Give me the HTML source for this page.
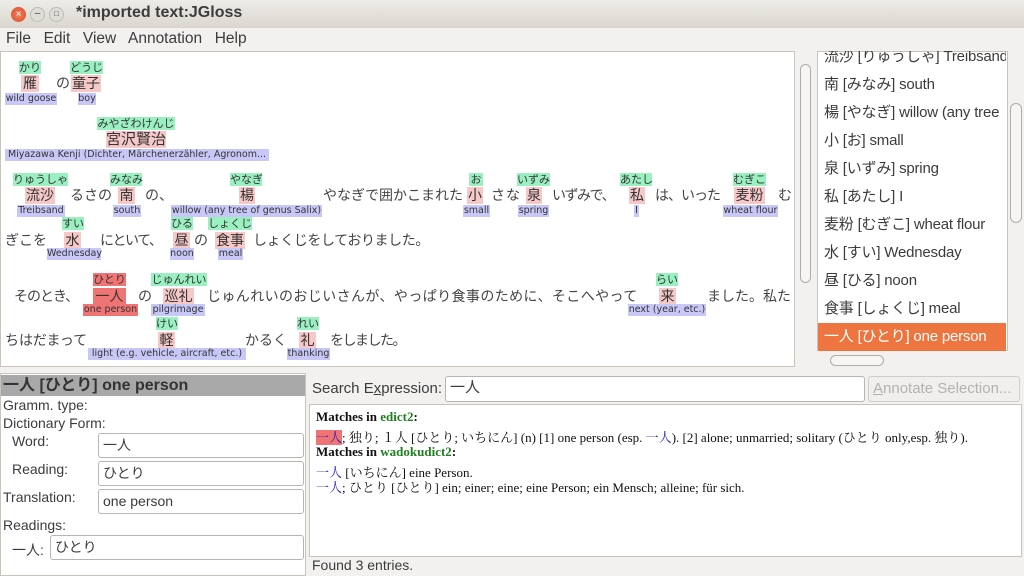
<!DOCTYPE html>
<html><head><meta charset="utf-8"><style>
*{margin:0;padding:0;box-sizing:border-box}
body{width:1024px;height:576px;overflow:hidden;background:#f2f1f0;font-family:"Liberation Sans","Noto Sans CJK JP",sans-serif;position:relative;color:#3c3c3c}
.a{position:absolute;white-space:nowrap}
.r{position:absolute;white-space:nowrap;background:#9af0c0;font-size:11px;line-height:12px;height:13px;text-align:center;color:#333;font-family:"Noto Sans CJK JP",sans-serif}
.k{position:absolute;white-space:nowrap;background:#f6c8c8;font-size:14px;line-height:16px;height:17px;text-align:center;color:#333;font-family:"Noto Sans CJK JP",sans-serif}
.t{position:absolute;white-space:nowrap;background:#c8c8f8;font-size:9.5px;line-height:11px;height:12px;text-align:center;color:#333;font-family:"DejaVu Sans",sans-serif}
.s{position:absolute;white-space:nowrap;font-size:14px;line-height:16px;color:#444;font-family:"Noto Sans CJK JP",sans-serif}
.sel{background:#f07474}
.li{position:absolute;left:818px;width:188px;height:28px;line-height:28px;padding-left:6px;font-size:15px;color:#3c3c3c;white-space:nowrap;overflow:hidden;font-family:"Liberation Sans","Noto Sans CJK JP",sans-serif;letter-spacing:-0.2px}
.inp{position:absolute;background:#fff;border:1px solid #b8b4ae;border-radius:3px;font-size:14px;padding-left:4px;line-height:22px}
.lb{position:absolute;font-size:14px;color:#3c3c3c;white-space:nowrap}
.sv{font-family:"Liberation Serif","Noto Serif CJK SC",serif;font-size:13px;color:#111;position:absolute;left:316px;white-space:nowrap}
.bl{color:#2020c0}
.g{color:#208020}
</style></head><body>
<div class="a" style="left:0;top:0;width:1024px;height:28px;background:linear-gradient(#eeece8,#dad6cf)"></div>
<div class="a" style="left:11px;top:7px;width:15px;height:15px;border-radius:50%;background:radial-gradient(#f4845a,#d6462a);color:#fff;font-size:10px;text-align:center;line-height:15px">×</div>
<div class="a" style="left:30px;top:7px;width:15px;height:15px;border-radius:50%;background:#e0ddd6;border:1px solid #bbb;font-size:10px;text-align:center;line-height:12px">–</div>
<div class="a" style="left:49px;top:7px;width:15px;height:15px;border-radius:50%;background:#e0ddd6;border:1px solid #bbb;font-size:8px;text-align:center;line-height:12px">□</div>
<div class="a" style="left:76px;top:4px;font-size:16px;font-weight:bold;color:#3c3c3c">*imported text:JGloss</div>
<div class="a" style="left:6px;top:30px;font-size:15.5px;color:#3c3c3c;word-spacing:2px">File&nbsp; Edit&nbsp; View&nbsp; Annotation&nbsp; Help</div>
<div class="a" style="left:0;top:51px;width:795px;height:316px;background:#fff;border:1px solid #c8c4bc"></div>
<div class="r" style="left:19px;top:61px;width:22px">かり</div>
<div class="k" style="left:21px;top:75px;width:18px">雁</div>
<div class="s" style="left:56px;top:75px">の</div>
<div class="r" style="left:70px;top:61px;width:33px">どうじ</div>
<div class="k" style="left:71px;top:75px;width:30px">童子</div>
<div class="t" style="left:5px;top:93px;width:52px">wild goose</div>
<div class="t" style="left:78px;top:93px;width:18px">boy</div>
<div class="r" style="left:97px;top:117px;width:78px">みやざわけんじ</div>
<div class="k" style="left:106px;top:131px;width:60px;font-size:15px">宮沢賢治</div>
<div class="t" style="left:5px;top:149px;width:264px">Miyazawa Kenji (Dichter, Märchenerzähler, Agronom...</div>
<div class="r" style="left:13px;top:173px;width:55px">りゅうしゃ</div>
<div class="k" style="left:25px;top:187px;width:30px">流沙</div>
<div class="s" style="left:70px;top:187px">るさの</div>
<div class="r" style="left:110px;top:173px;width:32px">みなみ</div>
<div class="k" style="left:118px;top:187px;width:17px">南</div>
<div class="s" style="left:145px;top:187px">の、</div>
<div class="r" style="left:230px;top:173px;width:32px">やなぎ</div>
<div class="k" style="left:239px;top:187px;width:16px">楊</div>
<div class="s" style="left:323px;top:187px">やなぎで囲かこまれた</div>
<div class="r" style="left:469px;top:173px;width:14px">お</div>
<div class="k" style="left:467px;top:187px;width:16px">小</div>
<div class="s" style="left:491px;top:187px;letter-spacing:1px">さな</div>
<div class="r" style="left:517px;top:173px;width:33px">いずみ</div>
<div class="k" style="left:526px;top:187px;width:16px">泉</div>
<div class="s" style="left:552px;top:187px;letter-spacing:-1.5px">いずみで、</div>
<div class="r" style="left:620px;top:173px;width:32px">あたし</div>
<div class="k" style="left:629px;top:187px;width:16px">私</div>
<div class="s" style="left:655px;top:187px;letter-spacing:-1px">は、いった</div>
<div class="r" style="left:733px;top:173px;width:33px">むぎこ</div>
<div class="k" style="left:734px;top:187px;width:31px">麦粉</div>
<div class="s" style="left:778px;top:187px">む</div>
<div class="t" style="left:17px;top:205px;width:48px">Treibsand</div>
<div class="t" style="left:113px;top:205px;width:28px">south</div>
<div class="t" style="left:171px;top:205px;width:151px">willow (any tree of genus Salix)</div>
<div class="t" style="left:463px;top:205px;width:27px">small</div>
<div class="t" style="left:518px;top:205px;width:31px">spring</div>
<div class="t" style="left:634px;top:205px;width:5px">I</div>
<div class="t" style="left:723px;top:205px;width:55px">wheat flour</div>
<div class="s" style="left:5px;top:232px">ぎこを</div>
<div class="r" style="left:62px;top:217px;width:22px">すい</div>
<div class="k" style="left:64px;top:232px;width:17px">水</div>
<div class="s" style="left:100px;top:232px;letter-spacing:-1.5px">にといて、</div>
<div class="r" style="left:171px;top:217px;width:22px">ひる</div>
<div class="k" style="left:173px;top:232px;width:17px">昼</div>
<div class="s" style="left:194px;top:232px">の</div>
<div class="r" style="left:208px;top:217px;width:44px">しょくじ</div>
<div class="k" style="left:215px;top:232px;width:30px">食事</div>
<div class="s" style="left:253px;top:232px;letter-spacing:-0.4px">しょくじをしておりました。</div>
<div class="t" style="left:47px;top:248px;width:54px">Wednesday</div>
<div class="t" style="left:170px;top:248px;width:24px">noon</div>
<div class="t" style="left:218px;top:248px;width:25px">meal</div>
<div class="s" style="left:14px;top:288px;letter-spacing:-1px">そのとき、</div>
<div class="r sel" style="left:93px;top:273px;width:33px">ひとり</div>
<div class="k sel" style="left:93px;top:288px;width:33px">一人</div>
<div class="s" style="left:138px;top:288px">の</div>
<div class="r" style="left:151px;top:273px;width:56px">じゅんれい</div>
<div class="k" style="left:163px;top:288px;width:31px">巡礼</div>
<div class="s" style="left:207px;top:288px;letter-spacing:0.4px">じゅんれいのおじいさんが、やっぱり食事のために、そこへやって</div>
<div class="r" style="left:656px;top:273px;width:22px">らい</div>
<div class="k" style="left:659px;top:288px;width:17px">来</div>
<div class="s" style="left:707px;top:288px">ました。私た</div>
<div class="t sel" style="left:83px;top:304px;width:55px">one person</div>
<div class="t" style="left:151px;top:304px;width:54px">pilgrimage</div>
<div class="t" style="left:628px;top:304px;width:78px">next (year, etc.)</div>
<div class="s" style="left:5px;top:332px">ちはだまって</div>
<div class="r" style="left:156px;top:317px;width:22px">けい</div>
<div class="k" style="left:158px;top:332px;width:17px">軽</div>
<div class="s" style="left:245px;top:332px">かるく</div>
<div class="r" style="left:297px;top:317px;width:22px">れい</div>
<div class="k" style="left:299px;top:332px;width:17px">礼</div>
<div class="s" style="left:330px;top:332px;letter-spacing:-1.5px">をしました。</div>
<div class="t" style="left:88px;top:348px;width:158px">light (e.g. vehicle, aircraft, etc.)</div>
<div class="t" style="left:287px;top:348px;width:43px">thanking</div>
<div class="a" style="left:797px;top:52px;width:16px;height:315px;background:#f2f1f0"></div>
<div class="a" style="left:800px;top:64px;width:11px;height:219px;border:1px solid #b0aca6;border-radius:6px;background:#f6f5f4"></div>
<div class="a" style="left:817px;top:51px;width:191px;height:300px;background:#fff;border:1px solid #c8c4bc;overflow:hidden"></div>
<div class="li" style="top:43px">流沙 [りゅうしゃ] Treibsand</div>
<div class="li" style="top:71px">南 [みなみ] south</div>
<div class="li" style="top:99px">楊 [やなぎ] willow (any tree</div>
<div class="li" style="top:127px">小 [お] small</div>
<div class="li" style="top:155px">泉 [いずみ] spring</div>
<div class="li" style="top:183px">私 [あたし] I</div>
<div class="li" style="top:211px">麦粉 [むぎこ] wheat flour</div>
<div class="li" style="top:239px">水 [すい] Wednesday</div>
<div class="li" style="top:267px">昼 [ひる] noon</div>
<div class="li" style="top:295px">食事 [しょくじ] meal</div>
<div class="li" style="top:323px;background:#ee7440;color:#fff">一人 [ひとり] one person</div>
<div class="a" style="left:817px;top:43px;width:191px;height:8px;background:#f2f1f0"></div>
<div class="a" style="left:1010px;top:103px;width:12px;height:120px;border:1px solid #b0aca6;border-radius:6px;background:#f6f5f4"></div>
<div class="a" style="left:830px;top:355px;width:54px;height:11px;border:1px solid #b0aca6;border-radius:6px;background:#f6f5f4"></div>
<div class="a" style="left:0;top:373px;width:306px;height:203px;background:#fff;border:1px solid #c8c4bc"></div>
<div class="a" style="left:1px;top:375px;width:304px;height:21px;background:#a8a8a8;font-size:16px;font-weight:bold;line-height:21px;padding-left:2px;color:#333">一人 [ひとり] one person</div>
<div class="lb" style="left:3px;top:397px">Gramm. type:</div>
<div class="lb" style="left:3px;top:415px">Dictionary Form:</div>
<div class="lb" style="left:12px;top:433px">Word:</div>
<div class="inp" style="left:98px;top:433px;width:206px;height:25px">一人</div>
<div class="lb" style="left:12px;top:461px">Reading:</div>
<div class="inp" style="left:98px;top:461px;width:206px;height:25px">ひとり</div>
<div class="lb" style="left:3px;top:489px">Translation:</div>
<div class="inp" style="left:98px;top:489px;width:206px;height:25px">one person</div>
<div class="lb" style="left:3px;top:517px">Readings:</div>
<div class="lb" style="left:12px;top:540px">一人:</div>
<div class="inp" style="left:50px;top:535px;width:254px;height:25px">ひとり</div>
<div class="lb" style="left:312px;top:380px;font-size:15px">Search E<u>x</u>pression:</div>
<div class="inp" style="left:445px;top:376px;width:420px;height:26px;font-size:15px">一人</div>
<div class="a" style="left:868px;top:376px;width:152px;height:26px;border:1px solid #d0ccc6;border-radius:3px;background:#f0efee;color:#b4b2ae;font-size:15px;line-height:24px;padding-left:4px;overflow:hidden"><u>A</u>nnotate Selection...</div>
<div class="a" style="left:309px;top:404px;width:713px;height:153px;background:#fff;border:1px solid #c8c4bc"></div>
<div class="sv" style="top:409px;font-weight:bold">Matches in <span class="g">edict2</span>:</div>
<div class="sv" style="top:427px"><span class="bl" style="background:#f07474">一人</span>; 独り; １人 [ひとり; いちにん] (n) [1] one person (esp. <span class="bl">一人</span>). [2] alone; unmarried; solitary (ひとり only,esp. 独り).</div>
<div class="sv" style="top:444px;font-weight:bold">Matches in <span class="g">wadokudict2</span>:</div>
<div class="sv" style="top:462px"><span class="bl">一人</span> [いちにん] eine Person.</div>
<div class="sv" style="top:477px"><span class="bl">一人</span>; ひとり [ひとり] ein; einer; eine; eine Person; ein Mensch; alleine; für sich.</div>
<div class="lb" style="left:312px;top:557px">Found 3 entries.</div>
</body></html>
